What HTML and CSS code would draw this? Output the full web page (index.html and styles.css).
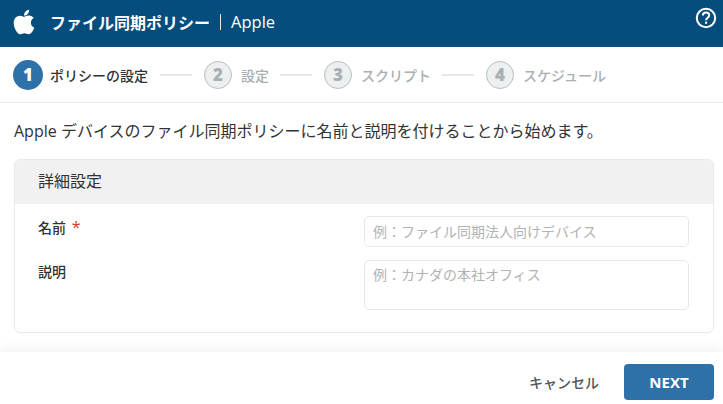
FILE: index.html
```html
<!DOCTYPE html>
<html lang="ja">
<head>
  <meta charset="UTF-8" />
  <meta name="viewport" content="width=device-width, initial-scale=1.0"/>
  <title>ファイル同期ポリシー | Apple</title>
  <link rel="stylesheet" href="styles.css">
</head>
<body>

  <header class="topbar">
    <svg class="apple-logo" viewBox="0 0 384 512" aria-hidden="true">
      <path d="M318.7 268.7c-.2-36.7 16.4-64.4 50-84.8-18.8-26.9-47.2-41.7-84.7-44.6-35.5-2.8-74.3 20.7-88.5 20.7-15 0-49.4-19.7-76.4-19.7C63.3 141.2 4 184.8 4 273.5q0 39.3 14.4 81.2c12.8 36.7 59 126.7 107.2 125.2 25.2-.6 43-17.9 75.8-17.9 31.8 0 48.3 17.9 76.4 17.9 48.6-.7 90.4-82.5 102.6-119.3-65.2-30.7-61.7-90-61.7-91.9zm-56.6-164.2c27.3-32.4 24.8-61.9 24-72.5-24.1 1.4-52 16.4-67.9 34.9-17.5 19.8-27.8 44.3-25.6 71.9 26.1 2 49.9-11.4 69.5-34.3z"/>
    </svg>
    <span class="topbar-title">ファイル同期ポリシー</span>
    <span class="topbar-sub">Apple</span>
    <svg class="help-icon" viewBox="0 0 22 22" aria-hidden="true">
      <circle cx="11" cy="11" r="9.2"/>
      <path d="M7.9 8.6c0-1.9 1.4-3 3.2-3s3.1 1.1 3.1 2.7c0 2.4-3.1 2.4-3.1 4.9"/>
      <path class="dot" d="M11.1 14.6v2.2"/>
    </svg>
  </header>

  <nav class="steps">
    <div class="step active"><span class="num">1</span><span class="name">ポリシーの設定</span></div>
    <span class="step-line"></span>
    <div class="step"><span class="num">2</span><span class="name">設定</span></div>
    <span class="step-line"></span>
    <div class="step"><span class="num">3</span><span class="name">スクリプト</span></div>
    <span class="step-line"></span>
    <div class="step"><span class="num">4</span><span class="name">スケジュール</span></div>
  </nav>

  <main class="content">
    <p class="intro">Apple デバイスのファイル同期ポリシーに名前と説明を付けることから始めます。</p>

    <section class="panel">
      <h2 class="panel-head">詳細設定</h2>
      <div class="panel-body">
        <div class="form-row">
          <label class="form-label" for="name">名前 <span class="required">*</span></label>
          <input class="form-input" id="name" type="text" placeholder="例：ファイル同期法人向けデバイス">
        </div>
        <div class="form-row">
          <label class="form-label" for="desc">説明</label>
          <textarea class="form-input form-area" id="desc" placeholder="例：カナダの本社オフィス"></textarea>
        </div>
      </div>
    </section>
  </main>

  <footer class="footer">
    <button class="btn-cancel">キャンセル</button>
    <button class="btn-next">NEXT</button>
  </footer>

</body>
</html>
```

FILE: styles.css
```css
* {
  box-sizing: border-box;
}

html, body {
  height: 100%;
}

body {
  margin: 0;
  display: flex;
  flex-direction: column;
  overflow: hidden;
  background-color: #fff;
  color: #333;
  font-family: "Open Sans", "Noto Sans CJK JP", sans-serif;
  font-size: 14px;
}

.topbar {
  display: flex;
  align-items: center;
  height: 47px;
  padding: 0 6px 3px 13px;
  background-color: #054d7d;
  color: #fff;
}

.apple-logo {
  width: 22px;
  height: 28px;
  margin-right: 15px;
  fill: #fff;
}

.topbar-title {
  font-size: 16px;
  font-weight: 700;
}

.topbar-sub {
  margin-left: 10px;
  padding-left: 10px;
  border-left: 1px solid #dfe8ee;
  font-size: 16.5px;
  line-height: 16px;
}

.help-icon {
  width: 22px;
  height: 22px;
  margin-left: auto;
  margin-top: -9px;
  fill: none;
  stroke: #fff;
  stroke-width: 2;
}

.steps {
  display: flex;
  align-items: center;
  height: 56px;
  padding: 0 13px 0;
  border-bottom: 1px solid #e8e8e8;
}

.step {
  display: flex;
  align-items: center;
  gap: 9px;
  color: #a9b0b4;
  font-size: 14px;
  font-weight: 500;
}

.step .num {
  display: flex;
  align-items: center;
  justify-content: center;
  width: 28px;
  height: 28px;
  border: 1px solid #b7bfc3;
  border-radius: 50%;
  background-color: #ecf0f1;
  font-size: 17px;
  font-weight: 800;
}

.step.active {
  gap: 7px;
  margin-right: 1px;
  color: #333;
}

.step.active .num {
  width: 30px;
  height: 30px;
  border: none;
  background-color: #2e70a8;
  color: #fff;
}

.step-line {
  width: 32px;
  height: 2px;
  margin: 0 12px 0 11px;
  background-color: #e6e8e9;
}

.content {
  flex: 1;
  padding: 0 9px 0 14px;
}

.intro {
  margin: 18px 0 18px;
  font-size: 16px;
  line-height: 20px;
}

.panel {
  border: 1px solid #e9e9e9;
  border-radius: 6px;
  overflow: hidden;
  height: 174px;
}

.panel-head {
  margin: 0;
  height: 44px;
  padding: 0 23px;
  background-color: #f1f1f1;
  font-size: 16px;
  font-weight: 400;
  line-height: 43px;
}

.panel-body {
  display: flex;
  flex-direction: column;
  gap: 13px;
  padding: 12px 24px 0 23px;
}

.form-row {
  display: grid;
  grid-template-columns: 326px 325px;
}

.form-label {
  font-size: 14px;
  font-weight: 500;
  line-height: 23px;
}

.required {
  margin-left: 2px;
  color: #d0392b;
  font-size: 16px;
}

.form-input {
  display: block;
  width: 325px;
  height: 31px;
  padding: 0 8px;
  border: 1px solid #e8e8e8;
  border-radius: 5px;
  outline: none;
  color: #333;
  font-family: inherit;
  font-size: 14px;
}

.form-area {
  height: 50px;
  padding-top: 3px;
  resize: none;
}

.form-input::placeholder {
  color: #b2b2b2;
  opacity: 1;
}

.footer {
  display: flex;
  align-items: center;
  justify-content: flex-end;
  gap: 25px;
  height: 52px;
  padding: 0 9px 0 0;
  background-color: #fff;
  box-shadow: 0 -4px 10px rgba(0, 0, 0, 0.05);
}

.footer button {
  border: none;
  font-family: inherit;
  cursor: pointer;
}

.btn-cancel {
  margin-top: 7px;
  padding: 0;
  background: none;
  color: #555;
  font-size: 14px;
  font-weight: 500;
}

.btn-next {
  width: 90px;
  height: 36px;
  margin-top: 7px;
  border-radius: 4px;
  background-color: #2e70a8;
  color: #fff;
  font-size: 15px;
  font-weight: 700;
}
```
